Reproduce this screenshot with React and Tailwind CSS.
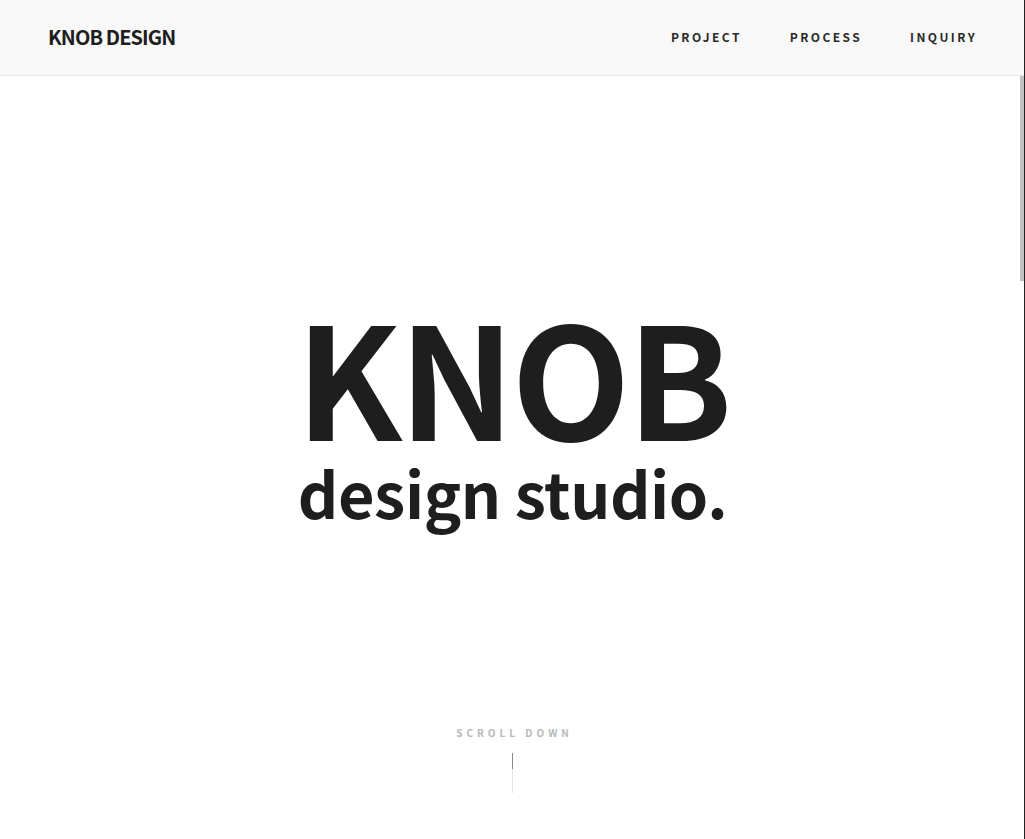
import React from 'react';

const font = { fontFamily: '"Noto Sans CJK KR", "Noto Sans", sans-serif' };

const App = () => {
  const menu = ['PROJECT', 'PROCESS', 'INQUIRY'];

  return (
    <div className="relative min-h-screen h-[839px] bg-white text-[#1e1e1e] overflow-hidden" style={font}>
      {/* Header */}
      <header className="h-[76px] flex items-center justify-between pl-[48px] pr-[48px] bg-[#f8f8f8] border-b border-[#e8e8e8]">
        <h1 className="text-[20px] font-bold tracking-[-0.9px] leading-none mt-[-2px]">KNOB DESIGN</h1>
        <nav className="flex items-center gap-[48px] mt-[-2px]">
          {menu.map((item) => (
            <a key={item} className="text-[12px] font-bold tracking-[2.4px] leading-none text-[#2a2a2a]">
              {item}
            </a>
          ))}
        </nav>
      </header>

      {/* Hero */}
      <section className="h-[763px] flex flex-col items-center">
        <div className="flex flex-col items-center mt-[233px]">
          <div className="text-[155px] font-bold leading-[130px] tracking-[-3.5px]">KNOB</div>
          <div className="text-[63px] font-bold leading-[50px] tracking-[-0.4px] mt-[28px]">design studio.</div>
        </div>

        <div className="mt-auto mb-[46px] flex flex-col items-center">
          <span className="text-[10px] font-bold tracking-[4px] pl-[4px] text-[#b8b8b8] leading-none">
            SCROLL DOWN
          </span>
          <div className="mt-[15px] flex flex-col w-px">
            <div className="h-[16px] bg-[#8a8a8a]" />
            <div className="h-[24px] bg-[#e4e4e4]" />
          </div>
        </div>
      </section>

      {/* Scrollbar overlay */}
      <div className="absolute top-0 right-0 h-full w-px bg-[#222]" />
      <div className="absolute top-[76px] right-[1px] w-[4px] h-[205px] bg-[#c1c1c1]" />
    </div>
  );
};

export default App;
